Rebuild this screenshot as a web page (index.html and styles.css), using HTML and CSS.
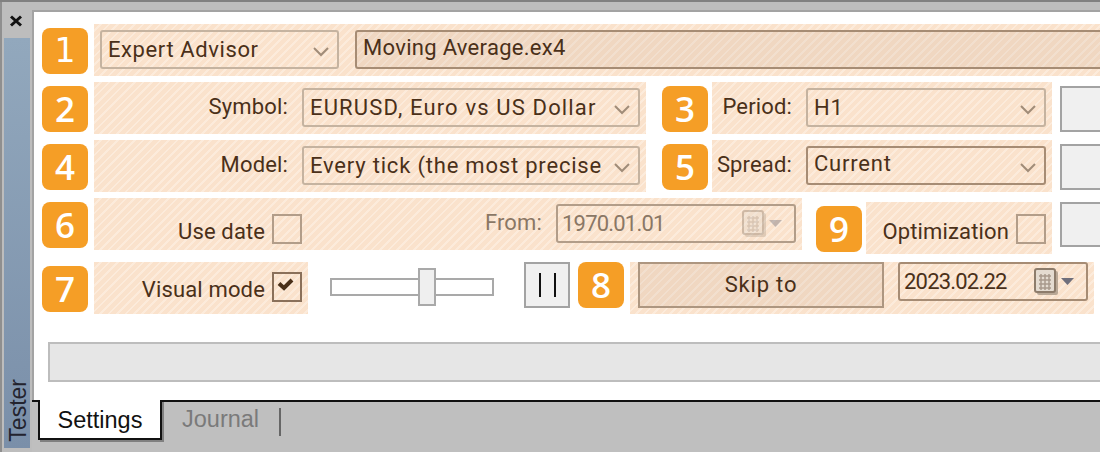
FILE: index.html
```html
<!DOCTYPE html>
<html lang="en">
<head>
    <meta charset="UTF-8">
    <title>Tester</title>
    <link rel="stylesheet" href="styles.css">
</head>
<body>

<div class="window">
    <div class="side">
        <svg class="close" width="14" height="12" viewBox="0 0 14 12"><path d="M2 1.5 L12 10.5 M12 1.5 L2 10.5" stroke="#111" stroke-width="3" fill="none"/></svg>
        <div class="side-title"><span>Tester</span></div>
    </div>

    <div class="main">
        <div class="panel">
            <div class="row">
                <div class="num num-foot">1</div>
                <div class="zone zone-wide">
                    <div class="select w-239"><span class="tight">Expert Advisor</span><svg class="chev" width="16" height="10" viewBox="0 0 16 10"><path d="M1 1 L8 8 L15 1" stroke="#a08c78" stroke-width="2" fill="none"/></svg></div>
                    <div class="select select-dark file-input"><span>Moving Average.ex4</span></div>
                </div>
            </div>

            <div class="row">
                <div class="num">2</div>
                <div class="zone w-552">
                    <label>Symbol:</label>
                    <div class="select w-338"><span class="wide">EURUSD, Euro vs US Dollar</span><svg class="chev" width="16" height="10" viewBox="0 0 16 10"><path d="M1 1 L8 8 L15 1" stroke="#a08c78" stroke-width="2" fill="none"/></svg></div>
                </div>
                <div class="num ml-16">3</div>
                <div class="zone w-340 ml-4">
                    <label>Period:</label>
                    <div class="select w-240"><span>H1</span><svg class="chev" width="16" height="10" viewBox="0 0 16 10"><path d="M1 1 L8 8 L15 1" stroke="#a08c78" stroke-width="2" fill="none"/></svg></div>
                </div>
                <div class="side-btn"></div>
            </div>

            <div class="row">
                <div class="num">4</div>
                <div class="zone w-552">
                    <label>Model:</label>
                    <div class="select w-338"><span>Every tick (the most precise</span><svg class="chev" width="16" height="10" viewBox="0 0 16 10"><path d="M1 1 L8 8 L15 1" stroke="#a08c78" stroke-width="2" fill="none"/></svg></div>
                </div>
                <div class="num ml-16">5</div>
                <div class="zone w-340 ml-4">
                    <label>Spread:</label>
                    <div class="select select-strong w-240"><span class="raised">Current</span><svg class="chev" width="16" height="10" viewBox="0 0 16 10"><path d="M1 1 L8 8 L15 1" stroke="#a08c78" stroke-width="2" fill="none"/></svg></div>
                </div>
                <div class="side-btn"></div>
            </div>

            <div class="row row-date">
                <div class="num">6</div>
                <div class="zone w-708 date-zone">
                    <label class="low">Use date</label>
                    <div class="check low-box"></div>
                    <label class="muted from">From:</label>
                    <div class="select muted date-off">
                        <span class="date-text">1970.01.01</span>
                        <svg class="cal" width="40" height="28" viewBox="0 0 40 28" opacity="0.4">
                            <rect x="3" y="3" width="21" height="24" rx="2" fill="#b9a896"/>
                            <rect x="1" y="1" width="20" height="23" rx="2" fill="#e4dbd0" stroke="#8d7c6b" stroke-width="2"/>
                            <path d="M5 8 H17 M5 12 H17 M5 16 H17 M5 20 H17 M7 6 V22 M11 6 V22 M15 6 V22" stroke="#a89a8c" stroke-width="1.5"/>
                            <path d="M27 10 H40 L33.5 17 Z" fill="#6f6f7c"/>
                        </svg>
                    </div>
                </div>
                <div class="num num-9">9</div>
                <div class="zone w-186 ml-4 opt-zone">
                    <label class="low">Optimization</label>
                    <div class="check low-box"></div>
                </div>
                <div class="side-btn side-btn-short"></div>
            </div>

            <div class="row row-visual">
                <div class="num">7</div>
                <div class="zone w-214 visual-zone">
                    <label class="low">Visual mode</label>
                    <div class="check check-on low-box">
                        <svg width="26" height="26" viewBox="0 0 26 26"><path d="M5 9.5 L10 14 L18 6" stroke="#4a3019" stroke-width="4" fill="none"/></svg>
                    </div>
                </div>
                <div class="slider"><div class="thumb"></div></div>
                <div class="pause"><i></i><i></i></div>
                <div class="num ml-8 num-top">8</div>
                <div class="zone w-464 skip-zone">
                    <div class="skip">Skip to</div>
                    <div class="select select-strong date-on">
                        <span class="date-text">2023.02.22</span>
                        <svg class="cal" width="40" height="28" viewBox="0 0 40 28">
                            <rect x="3" y="3" width="21" height="24" rx="2" fill="#b9a896"/>
                            <rect x="1" y="1" width="20" height="23" rx="2" fill="#e4dbd0" stroke="#8d7c6b" stroke-width="2"/>
                            <path d="M5 8 H17 M5 12 H17 M5 16 H17 M5 20 H17 M7 6 V22 M11 6 V22 M15 6 V22" stroke="#a89a8c" stroke-width="1.5"/>
                            <path d="M27 10 H40 L33.5 17 Z" fill="#6f6f7c"/>
                        </svg>
                    </div>
                </div>
            </div>

            <div class="progress"></div>
        </div>

        <div class="tabs">
            <div class="tab active">Settings</div>
            <div class="tab">Journal</div>
            <div class="tab-sep"></div>
        </div>
    </div>
</div>

</body>
</html>
```

FILE: styles.css
```css
html, body {
    margin: 0;
    padding: 0;
}
body {
    width: 1100px;
    height: 452px;
    overflow: hidden;
    font-family: Roboto, 'Liberation Sans', sans-serif;
    color: #4a3019;
}
.window {
    display: flex;
    height: 450px;
    background: #bdbdbd;
    border-top: 2px solid #808080;
}
.side {
    width: 32px;
    flex: none;
    box-sizing: border-box;
    border-left: 2px solid #8f8f8f;
    padding: 0 2px 4px 2px;
    display: flex;
    flex-direction: column;
    align-items: stretch;
}
.close {
    display: block;
    margin: 13px 0 0 5px;
}
.side-title {
    margin-top: 11px;
    flex: 1;
    background: linear-gradient(#92a8bd, #7a8fa9);
    display: flex;
    align-items: flex-end;
    justify-content: center;
}
.side-title span {
    writing-mode: vertical-rl;
    transform: rotate(180deg);
    font-family: 'Liberation Sans', sans-serif;
    font-size: 23px;
    color: #23232e;
    padding-top: 6px;
    padding-right: 2px;
}
.main {
    flex: 1;
    min-width: 0;
    display: flex;
    flex-direction: column;
    padding-top: 8px;
}
.panel {
    height: 376px;
    background: white;
    border-top: 2px solid #a3a3a3;
    border-left: 2px solid #a3a3a3;
    padding: 12px 0 0 8px;
    overflow: hidden;
}
.row {
    display: flex;
    align-items: flex-start;
    height: 52px;
    margin-bottom: 6px;
    width: 1200px;
}
.row-date {
    height: 56px;
    margin-bottom: 8px;
}
.num {
    width: 46px;
    height: 46px;
    flex: none;
    margin-top: 4px;
    background: #f59e26;
    border-radius: 8px;
    color: white;
    font-family: 'Open Sans', sans-serif;
    font-weight: 600;
    font-size: 35px;
    line-height: 46px;
    text-align: center;
}
.num-foot {
    font-family: 'DejaVu Sans', sans-serif;
    font-weight: 400;
    font-size: 33px;
}
.num-9 {
    margin-top: 8px;
    margin-left: 14px;
}
.num-top {
    margin-top: 0;
}
.zone {
    flex: none;
    box-sizing: border-box;
    height: 52px;
    margin-left: 6px;
    padding: 6px;
    display: flex;
    align-items: flex-start;
    justify-content: flex-end;
    gap: 14px;
    background: repeating-linear-gradient(135deg, #fae2cc 0, #fae2cc 4px, #fcebdb 4px, #fcebdb 6px);
}
.zone-wide {
    width: 1006px;
    justify-content: flex-start;
    gap: 16px;
}
.w-552 { width: 552px; }
.w-340 { width: 340px; }
.w-708 { width: 708px; }
.w-186 { width: 186px; }
.w-214 { width: 214px; }
.w-464 { width: 464px; }
.w-239 { width: 239px; }
.w-338 { width: 338px; }
.w-240 { width: 240px; }
.ml-16 { margin-left: 16px; }
.ml-8 { margin-left: 8px; }
.zone.ml-4 { margin-left: 4px; }

label {
    font-size: 22px;
    line-height: 38px;
    letter-spacing: 0.15px;
    white-space: nowrap;
}
label.low {
    line-height: 40px;
    margin-top: 8px;
}
.select {
    flex: none;
    box-sizing: border-box;
    height: 39px;
    border: 2px solid #c5b3a0;
    border-radius: 3px;
    padding: 0 8px 0 6px;
    display: flex;
    align-items: center;
    justify-content: space-between;
    font-size: 22px;
    letter-spacing: 0.8px;
    white-space: nowrap;
}
.tight {
    letter-spacing: 0.6px;
}
.wide {
    letter-spacing: 1.15px;
}
.select-dark {
    border-color: #a68c74;
    background: rgba(180, 150, 120, 0.13);
    letter-spacing: 0.3px;
}
.select-strong {
    border-color: #a68c74;
}
.file-input {
    width: 800px;
}
.file-input span, .raised {
    position: relative;
    top: -2px;
}
.chev {
    margin-top: 4px;
}
.side-btn {
    width: 60px;
    height: 46px;
    flex: none;
    box-sizing: border-box;
    margin: 4px 0 0 8px;
    background: #f0f0f0;
    border: 2px solid #a3a3a3;
}
.side-btn-short {
    height: 45px;
}

.date-zone {
    justify-content: flex-start;
    gap: 0;
}
.date-zone label.low {
    margin-left: 78px;
}
.check {
    box-sizing: border-box;
    width: 30px;
    height: 30px;
    flex: none;
    border: 2px solid #b29d89;
    display: flex;
    align-items: center;
    justify-content: center;
}
.check-on {
    border-color: #8a705a;
}
.low-box {
    margin-top: 10px;
    margin-left: 7px;
}
.from {
    margin-left: auto;
    margin-right: 14px;
}
.muted {
    color: #8a7765;
}
.date-off {
    width: 240px;
    border-color: #b29d89;
    padding-left: 4px;
    padding-right: 12px;
}
.date-text {
    letter-spacing: -0.8px;
}
.opt-zone {
    margin-top: 4px;
    gap: 0;
}
.opt-zone label.low {
    margin-top: 4px;
}
.opt-zone .low-box {
    margin-top: 6px;
}

.visual-zone {
    gap: 0;
}
.visual-zone label.low {
    margin-top: 0;
    line-height: 44px;
}
.visual-zone .low-box {
    margin-top: 4px;
}
.slider {
    position: relative;
    box-sizing: border-box;
    width: 164px;
    height: 18px;
    flex: none;
    margin: 16px 0 0 22px;
    border: 2px solid #a9a9a9;
    background: white;
}
.thumb {
    position: absolute;
    left: 86px;
    top: -12px;
    width: 18px;
    height: 38px;
    box-sizing: border-box;
    background: #efefef;
    border: 2px solid #a9a9a9;
}
.pause {
    box-sizing: border-box;
    width: 46px;
    height: 46px;
    flex: none;
    margin-left: 30px;
    background: #f0f0f0;
    border: 2px solid #a3a3a3;
    display: flex;
    justify-content: center;
    align-items: center;
    gap: 13px;
}
.pause i {
    display: block;
    width: 2px;
    height: 24px;
    background: #111;
}
.skip-zone {
    padding: 0 6px 0 8px;
    justify-content: flex-start;
}
.skip {
    box-sizing: border-box;
    width: 246px;
    height: 46px;
    flex: none;
    border: 2px solid #ad9680;
    background: rgba(180, 150, 120, 0.13);
    font-size: 22px;
    letter-spacing: 0.8px;
    line-height: 42px;
    text-align: center;
}
.date-on {
    width: 190px;
    padding-left: 4px;
    padding-right: 12px;
}

.progress {
    box-sizing: border-box;
    width: 1100px;
    height: 40px;
    margin: 28px 0 0 6px;
    background: #e6e6e6;
    border: 2px solid #bdbdbd;
}

.tabs {
    height: 50px;
    background: #bfbfbf;
    border-top: 2px solid #111;
    display: flex;
    align-items: flex-start;
    padding-left: 6px;
    font-family: 'Liberation Sans', sans-serif;
    font-size: 23.5px;
}
.tab {
    box-sizing: border-box;
    height: 38px;
    line-height: 34px;
    padding: 0 20px;
    color: #7a7a7a;
}
.tab.active {
    width: 124px;
    margin-top: -2px;
    padding: 2px 0 0;
    height: 40px;
    line-height: 36px;
    background: white;
    color: #111;
    border: 2px solid #111;
    border-top: 0;
    box-shadow: 2px 2px 0 #808080;
    text-align: center;
}
.tab-sep {
    width: 2px;
    height: 28px;
    margin: 6px 0 0 0;
    background: #666;
}
```
